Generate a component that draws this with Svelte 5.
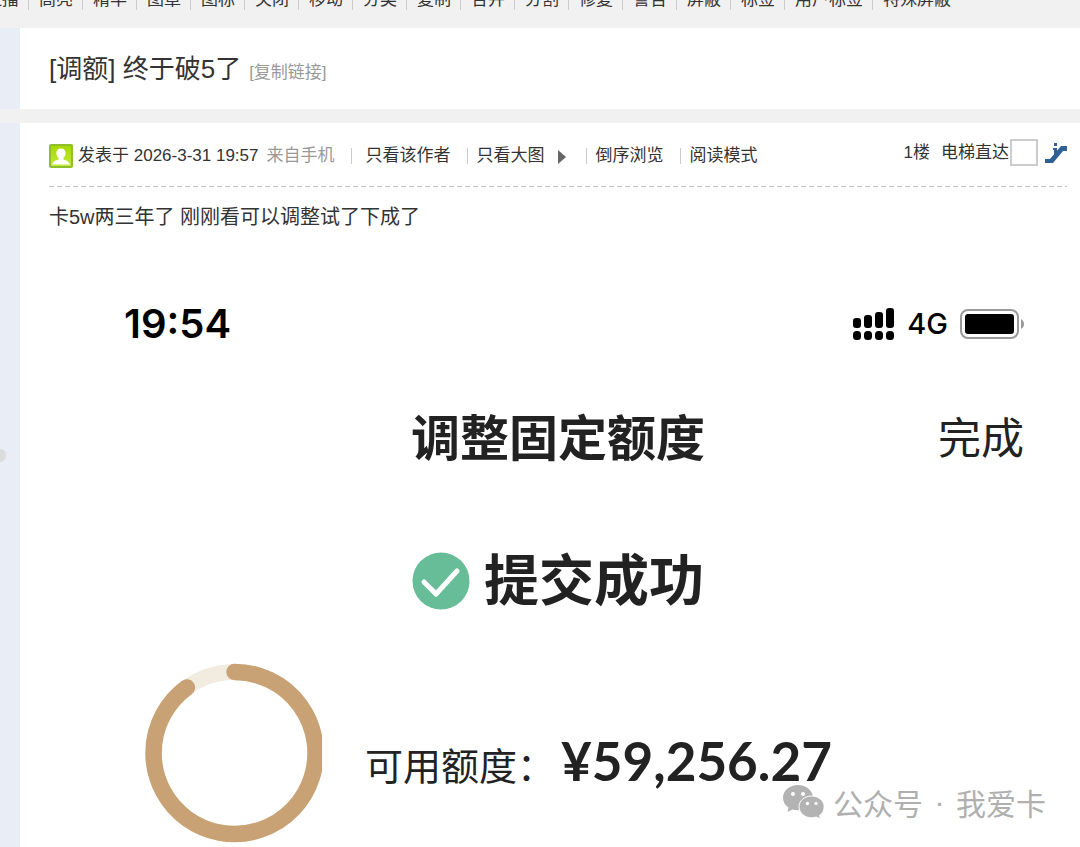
<script>
	const tools = ['直播', '高亮', '精华', '图章', '图标', '关闭', '移动', '分类', '复制', '合并', '分割', '修复', '警告', '屏蔽', '标签', '用户标签', '特殊屏蔽'];

	let floor = '';
</script>

<div class="page">
	<div class="toolbar">
		<nav>
			{#each tools as tool}
				<a href="#mod">{tool}</a>
			{/each}
		</nav>
	</div>

	<header class="row">
		<div class="gutter"></div>
		<div class="subject">
			<h1>[调额] 终于破5了</h1>
			<a href="#copy">[复制链接]</a>
		</div>
	</header>

	<main class="row post">
		<div class="gutter">
			<span class="knob"></span>
		</div>
		<article>
			<div class="meta">
				<svg class="avatar" width="24" height="24" viewBox="0 0 24 24">
					<defs>
						<linearGradient id="lime" x1="0" y1="0" x2="0" y2="1">
							<stop offset="0" stop-color="#a6d800" />
							<stop offset="1" stop-color="#c3ea3c" />
						</linearGradient>
					</defs>
					<rect x="1" y="1" width="22" height="22" rx="1" fill="url(#lime)" stroke="#8fbf2a" stroke-width="2" />
					<path d="M12 4.500c-3 0-4.600 2-4.600 4.600 0 2 .8 3.800 2.200 4.800v1.600c-2.600.7-5.600 1.800-6.600 5h18c-1-3.200-4-4.300-6.600-5v-1.600c1.400-1 2.200-2.800 2.200-4.800 0-2.600-1.600-4.600-4.600-4.600z" fill="#fff" />
				</svg>
				<span class="date">发表于 2026-3-31 19:57</span>
				<span class="from">来自手机</span>
				<a class="first" href="#author">只看该作者</a>
				<a href="#images">只看大图
					<svg class="arrow" width="9" height="14" viewBox="0 0 9 14"><path d="M0 0l8 7-8 7z" fill="#666" /></svg>
				</a>
				<a href="#reverse">倒序浏览</a>
				<a href="#read">阅读模式</a>
				<div class="jump">
					<strong>1楼</strong>
					<label for="floor">电梯直达</label>
					<input id="floor" type="text" bind:value={floor} />
					<button aria-label="跳转到指定楼层">
						<svg width="22" height="22" viewBox="0 0 22 22">
							<path d="M0 17h5L16 4h6v5h-4L8 21H0z" fill="#2f6096" />
							<path d="M8 6h4v5l-3 3V8H8z" fill="#2f6096" />
							<rect x="9" y="1" width="3" height="3" fill="#2f6096" />
						</svg>
					</button>
				</div>
			</div>

			<p class="message">卡5w两三年了 刚刚看可以调整试了下成了</p>

			<section class="phone">
				<div class="status">
					<time>19:54</time>
					<div class="signal">
						<svg width="42" height="34" viewBox="0 0 42 34">
							<rect x="0" y="11" width="8" height="10" rx="3" />
							<rect x="11" y="8" width="8" height="13" rx="3" />
							<rect x="22" y="5" width="8" height="16" rx="3" />
							<rect x="33" y="1" width="8" height="20" rx="3" />
							<rect x="0" y="24" width="8" height="9" rx="3.500" />
							<rect x="11" y="24" width="8" height="9" rx="3.500" />
							<rect x="22" y="24" width="8" height="9" rx="3.500" />
							<rect x="33" y="24" width="8" height="9" rx="3.500" />
						</svg>
						<span>4G</span>
						<svg width="64" height="32" viewBox="0 0 64 32">
							<rect x="1" y="2" width="57" height="28" rx="7" fill="#fff" stroke="#999" stroke-width="2" />
							<rect x="5" y="6" width="49" height="20" rx="3" />
							<path d="M61 11c4 2 4 8 0 10z" fill="#999" />
						</svg>
					</div>
				</div>

				<div class="bar">
					<h2>调整固定额度</h2>
					<button>完成</button>
				</div>

				<div class="success">
					<svg width="58" height="58" viewBox="0 0 58 58">
						<circle cx="29" cy="29" r="28.500" fill="#66bd97" />
						<path d="M12 30l12 12 21-23" fill="none" stroke="#fff" stroke-width="5" stroke-linecap="round" stroke-linejoin="round" />
					</svg>
					<strong>提交成功</strong>
				</div>

				<div class="limit">
					<svg width="177" height="180" viewBox="0 0 177 180">
						<circle cx="89.500" cy="90" r="81" fill="none" stroke="#f2ece0" stroke-width="16" />
						<path d="M89.500 9A81 81 0 1 1 41.900 24.500" fill="none" stroke="#c8a274" stroke-width="16.500" stroke-linecap="round" />
					</svg>
					<span class="label">可用额度：</span>
					<span class="amount">¥59,256.27</span>
				</div>
			</section>

			<div class="watermark">
				<svg width="42" height="34" viewBox="0 0 42 34">
					<path d="M15 0C6.500 0 0 5.600 0 12.800c0 4 2 7.400 5.400 9.800L4.500 27l5-2.600c1.700.5 3.500.8 5.500.8 8.400 0 15-5.600 15-12.500S23.400 0 15 0z" fill="#b3b3b3" />
					<path d="M28.500 11C21.500 11 16 15.800 16 21.800s5.500 11 12.500 11c1.600 0 3.200-.3 4.600-.8l4.400 2-.9-3.600c2.900-2 4.600-5 4.600-8.600 0-6-5.700-10.800-12.700-10.800z" fill="#b3b3b3" stroke="#fff" />
					<g fill="#fff">
						<circle cx="10" cy="9" r="2" />
						<circle cx="20" cy="9" r="2" />
						<circle cx="24.500" cy="18.500" r="1.700" />
						<circle cx="33" cy="18.500" r="1.700" />
					</g>
				</svg>
				<span>公众号</span>
				<span class="dot">·</span>
				<span>我爱卡</span>
			</div>
		</article>
	</main>
</div>

<style>
	:global(body) {
		background: #f1f1f1;
	}
	.page {
		display: flex;
		flex-direction: column;
		min-height: 100vh;
		color: #333;
		font-family: "Liberation Sans", "Noto Sans CJK SC", sans-serif;
		font-size: 17px;
		line-height: 20px;
	}
	a {
		color: inherit;
		text-decoration: none;
		white-space: nowrap;
	}
	button {
		padding: 0;
		border: none;
		background: none;
		color: inherit;
		font: inherit;
		cursor: pointer;
	}
	svg {
		display: block;
		flex: none;
	}

	/* moderator tools, scrolled half out of view */
	.toolbar {
		height: 28px;
		overflow: hidden;
	}
	.toolbar nav {
		display: flex;
		margin: -10px 0 0 -25px;
	}
	.toolbar a {
		padding: 0 9px 0 10px;
		border-right: 1px solid #ccc;
	}
	.toolbar a:last-child {
		border-right: none;
	}

	.row {
		display: grid;
		grid-template-columns: 20px 1fr;
		background: #fff;
	}
	.gutter {
		position: relative;
		background: #e9edf6;
	}
	.knob {
		position: absolute;
		top: 326px;
		left: 0;
		width: 6px;
		height: 13px;
		border-radius: 0 6px 6px 0;
		background: #dcdcdc;
	}

	.subject {
		display: flex;
		align-items: baseline;
		gap: 8px;
		padding: 21px 29px 20px;
	}
	.subject h1 {
		margin: 0;
		font-size: 26px;
		font-weight: 400;
		line-height: 40px;
	}
	.subject a {
		color: #999;
	}

	.post {
		flex: 1;
		margin-top: 14px;
	}
	article {
		position: relative;
		padding: 0 13px 0 29px;
	}
	.meta {
		box-sizing: border-box;
		display: flex;
		align-items: center;
		height: 63px;
		padding-top: 2px;
		white-space: nowrap;
	}
	.meta::after {
		content: "";
		position: absolute;
		top: 63px;
		right: 13px;
		left: 29px;
		height: 1px;
		background: repeating-linear-gradient(90deg, #c4c4c4 0 5px, transparent 5px 8px);
	}
	.avatar {
		margin: 1px 5px 0 0;
	}
	.from {
		margin-left: 8px;
		color: #999;
	}
	.meta > a {
		display: flex;
		align-items: center;
		margin-left: 16px;
		padding-left: 10px;
		background: linear-gradient(#ccc, #ccc) 0 2px / 1px 16px no-repeat;
	}
	.meta > a.first {
		padding-left: 15px;
	}
	.arrow {
		margin: 2px 3px 0 13px;
	}
	.jump {
		display: flex;
		align-items: center;
		margin: 0 0 6px auto;
	}
	.jump strong {
		margin-right: 11px;
		font-weight: 400;
	}
	.jump input {
		box-sizing: border-box;
		width: 28px;
		height: 27px;
		margin: 0 7px 0 1px;
		padding: 0 4px;
		border: 2px solid #ccc;
		border-radius: 0;
		font: inherit;
	}

	.message {
		margin: 16px 0 0;
		font-size: 20px;
		line-height: 30px;
	}

	.phone {
		padding: 68px 43px 0 75px;
		color: #222;
	}
	.status {
		display: flex;
		align-items: center;
		justify-content: space-between;
		height: 48px;
		color: #000;
		font-family: Inter, sans-serif;
	}
	.status time {
		font-size: 40px;
		font-weight: 600;
		line-height: 48px;
	}
	.signal {
		display: flex;
		align-items: center;
		gap: 12px;
		font-size: 29px;
		font-weight: 500;
	}
	.bar {
		display: grid;
		grid-template-columns: 1fr auto 1fr;
		align-items: center;
		margin: 61px 0 0 -32px;
	}
	.bar h2 {
		grid-column: 2;
		margin: 0;
		font-size: 49px;
		font-weight: 700;
		line-height: 60px;
	}
	.bar button {
		justify-self: end;
		font-size: 43px;
		line-height: 60px;
	}
	.success {
		display: flex;
		align-items: center;
		justify-content: center;
		gap: 14px;
		margin: 82px 0 0 -32px;
	}
	.success strong {
		font-size: 55px;
		font-weight: 700;
		line-height: 60px;
	}
	.limit {
		display: flex;
		align-items: center;
		margin: 52px 0 0 21px;
		white-space: nowrap;
	}
	.label {
		margin: 28px 0 0 43px;
		font-size: 38px;
		line-height: 44px;
	}
	.amount {
		margin: 16px 0 0 6px;
		font-family: Lato, sans-serif;
		font-size: 53px;
		font-weight: 700;
		line-height: 60px;
	}

	.watermark {
		position: absolute;
		top: 659px;
		right: 34px;
		display: flex;
		align-items: center;
		color: #b0b0b0;
		font-family: "Noto Sans CJK SC", sans-serif;
		font-size: 30px;
		line-height: 40px;
	}
	.watermark svg {
		margin-right: 8px;
	}
	.watermark .dot {
		width: 33px;
		font-family: "Liberation Sans", sans-serif;
		text-align: center;
	}
</style>
